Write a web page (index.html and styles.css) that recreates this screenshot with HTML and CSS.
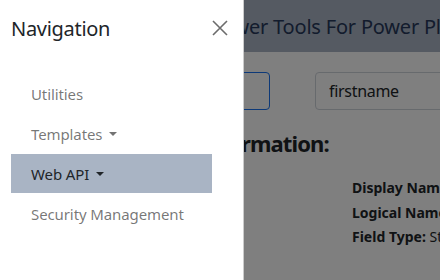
FILE: index.html
```html
<!DOCTYPE html>
<html>
<head>
<meta charset="utf-8">
<link rel="stylesheet" href="styles.css">
</head>
<body>
<div class="page">
  <header class="navbar">
    <span class="brand">Dataverse Power Tools For Power Platform</span>
  </header>
  <main class="content">
    <div class="search-row">
      <input class="field field-focus" type="text" value="">
      <input class="field" type="text" value="firstname">
    </div>
    <h2 class="section-title">Field Information:</h2>
    <div class="details">
      <div class="detail"><b>Display Name:</b> First Name</div>
      <div class="detail"><b>Logical Name:</b> firstname</div>
      <div class="detail"><b>Field Type:</b> String</div>
    </div>
  </main>
</div>
<div class="backdrop"></div>
<aside class="offcanvas">
  <div class="oc-header">
    <h5 class="oc-title">Navigation</h5>
    <button class="oc-close" aria-label="Close">
      <svg width="16" height="16" viewBox="0 0 16 16"><path d="M1 1 L15 15 M15 1 L1 15" stroke="#6c6c6c" stroke-width="1.6" fill="none"/></svg>
    </button>
  </div>
  <nav class="oc-nav">
    <a class="oc-link">Utilities</a>
    <a class="oc-link">Templates <span class="caret"></span></a>
    <a class="oc-link active">Web API <span class="caret"></span></a>
    <a class="oc-link">Security Management</a>
  </nav>
</aside>
</body>
</html>
```
FILE: styles.css
```css
html, body {
  margin: 0;
  padding: 0;
  width: 440px;
  height: 280px;
  overflow: hidden;
  background: #fff;
  font-family: "Noto Sans", sans-serif;
  color: #212529;
}
.page {
  width: 440px;
  height: 280px;
}
.navbar {
  height: 52px;
  background: #aab4c4;
  display: flex;
  align-items: center;
  padding-left: 112px;
  white-space: nowrap;
  overflow: hidden;
}
.brand {
  font-size: 20px;
  letter-spacing: -0.2px;
  color: #26385a;
}
.content {
  padding: 20px 0 0 0;
}
.search-row {
  display: flex;
  gap: 45px;
  margin-left: 100px;
}
.field {
  box-sizing: border-box;
  height: 38px;
  width: 170px;
  border: 1px solid #ced4da;
  border-radius: 4px;
  padding: 0 13px;
  font-family: inherit;
  font-size: 16px;
  letter-spacing: -0.3px;
  color: #212529;
  background: #fff;
  outline: none;
}
.field-focus {
  border-color: #1a73f0;
}
.section-title {
  margin: 17px 0 0 0;
  padding-left: 147px;
  font-size: 22px;
  font-weight: 700;
  letter-spacing: -0.9px;
  line-height: 32px;
  white-space: nowrap;
}
.details {
  margin-top: 17px;
  padding-left: 352px;
  white-space: nowrap;
  font-size: 14px;
  line-height: 24.5px;
}
.detail b { font-weight: 700; }
.backdrop {
  position: fixed;
  inset: 0;
  background: rgba(0,0,0,0.5);
}
.offcanvas {
  position: fixed;
  left: 0;
  top: 0;
  bottom: 0;
  width: 243px;
  background: #fff;
  border-right: 1px solid rgba(0,0,0,0.2);
  display: flex;
  flex-direction: column;
}
.oc-header {
  display: flex;
  align-items: center;
  justify-content: space-between;
  height: 56px;
  padding: 0 15px 0 11px;
}
.oc-title {
  margin: 0;
  font-size: 20px;
  font-weight: 400;
  letter-spacing: -0.3px;
  color: #212529;
}
.oc-close {
  border: 0;
  background: transparent;
  padding: 0;
  width: 16px;
  height: 16px;
  display: flex;
}
.oc-nav {
  display: flex;
  flex-direction: column;
  margin: 18px 31px 0 11px;
}
.oc-link {
  height: 40px;
  display: flex;
  align-items: center;
  padding-left: 20px;
  font-size: 15px;
  letter-spacing: -0.1px;
  color: rgba(0,0,0,0.55);
  white-space: nowrap;
}
.oc-link.active {
  background: #a9b4c4;
  color: #212529;
  height: 39px;
  margin-bottom: 1px;
}
.caret {
  display: inline-block;
  margin-left: 7px;
  width: 0;
  height: 0;
  border-left: 4px solid transparent;
  border-right: 4px solid transparent;
  border-top: 4px solid currentColor;
}
```
